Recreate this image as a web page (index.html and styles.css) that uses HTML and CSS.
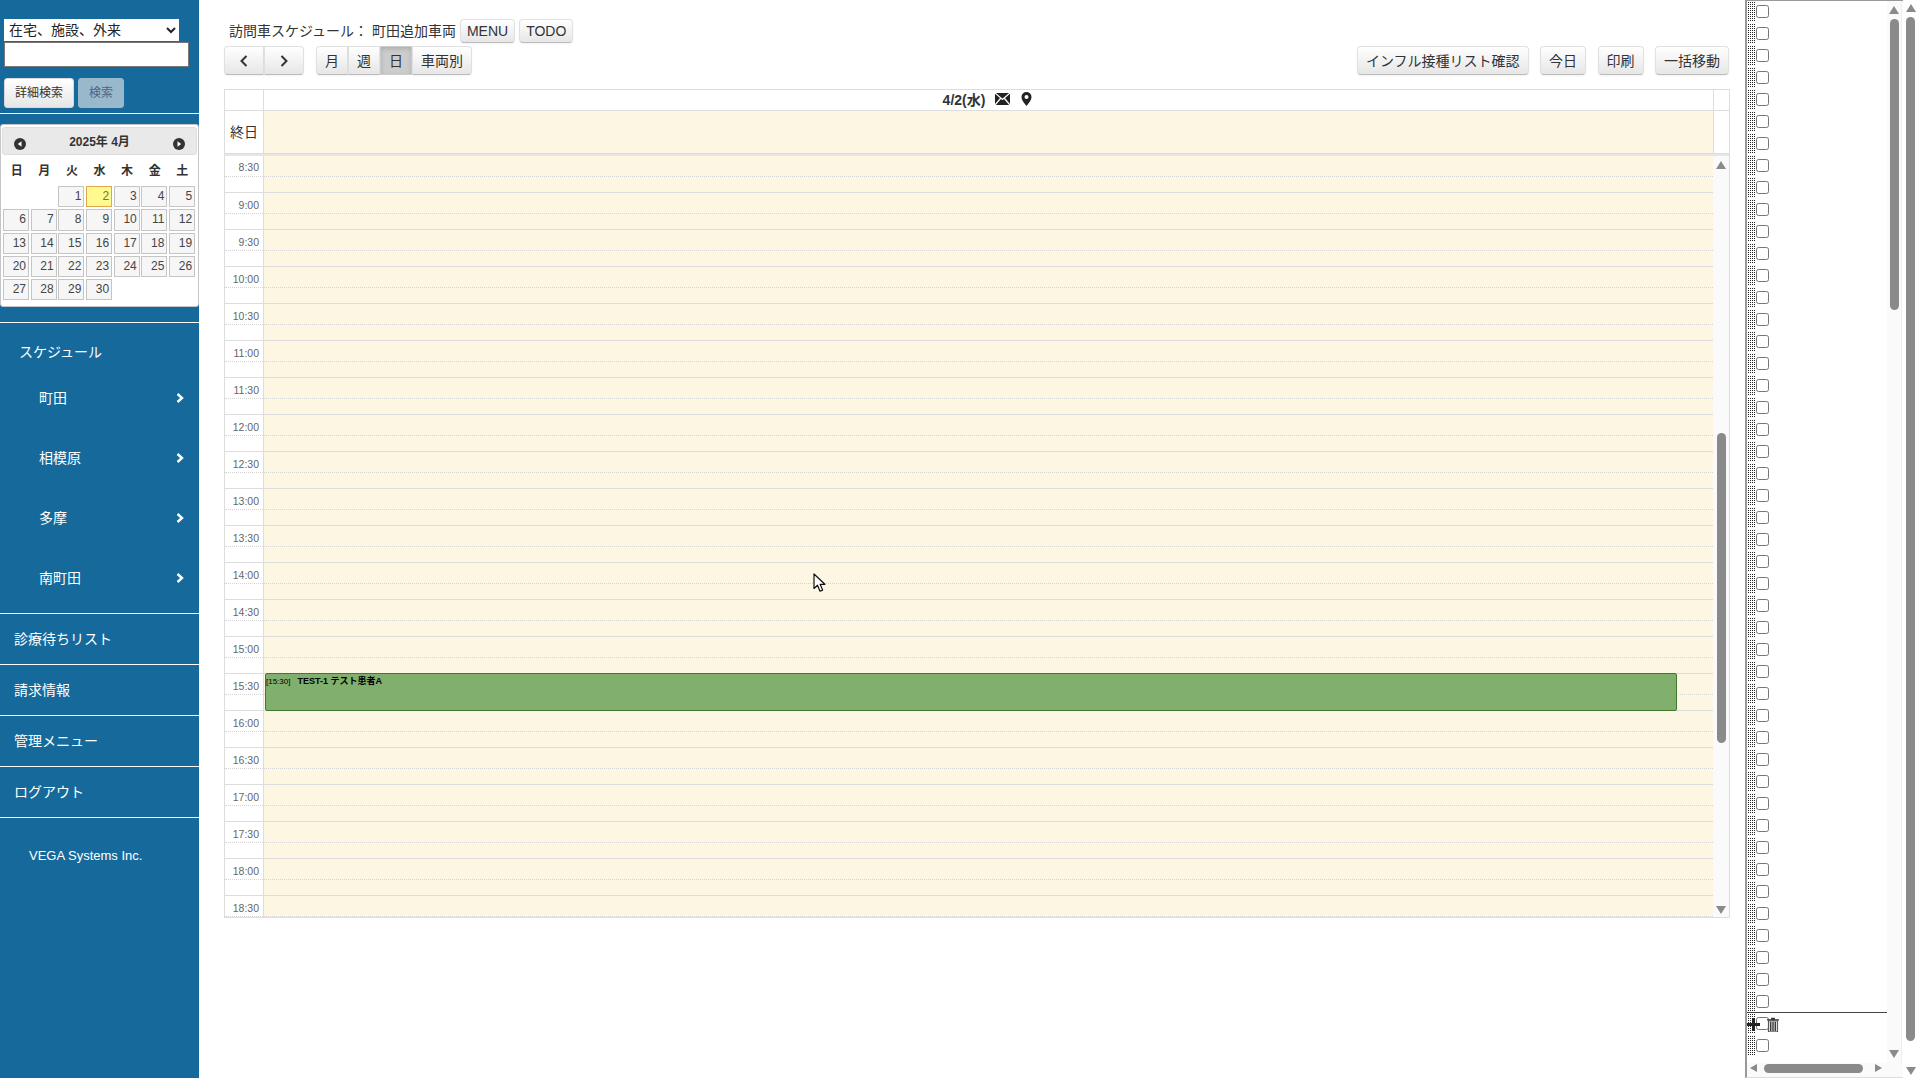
FILE: index.html
```html
<!DOCTYPE html>
<html lang="ja">
<head>
<meta charset="utf-8">
<title>訪問車スケジュール</title>
<link rel="stylesheet" href="styles.css">
</head>
<body>
<div class="app">
  <aside class="sidebar">
    <div class="search">
      <select class="search-select"><option>在宅、施設、外来</option></select>
      <input class="search-input" type="text">
      <div class="search-buttons">
        <button class="side-btn">詳細検索</button>
        <button class="side-btn disabled">検索</button>
      </div>
    </div>
    <div class="datepicker">
      <div class="dp-head">
        <svg class="dp-nav" viewBox="0 0 12 12"><circle cx="6" cy="6" r="6" fill="#333"/><path d="M7.5 3.2v5.6L3.8 6z" fill="#fff"/></svg>
        <span>2025年 4月</span>
        <svg class="dp-nav" viewBox="0 0 12 12"><circle cx="6" cy="6" r="6" fill="#333"/><path d="M4.5 3.2v5.6L8.2 6z" fill="#fff"/></svg>
      </div>
      <div class="dp-dow"><span>日</span><span>月</span><span>火</span><span>水</span><span>木</span><span>金</span><span>土</span></div>
      <div class="dp-grid">
        <span class="dp-empty"></span><span class="dp-empty"></span><span>1</span><span class="today">2</span><span>3</span><span>4</span><span>5</span>
        <span>6</span><span>7</span><span>8</span><span>9</span><span>10</span><span>11</span><span>12</span>
        <span>13</span><span>14</span><span>15</span><span>16</span><span>17</span><span>18</span><span>19</span>
        <span>20</span><span>21</span><span>22</span><span>23</span><span>24</span><span>25</span><span>26</span>
        <span>27</span><span>28</span><span>29</span><span>30</span>
      </div>
    </div>
    <nav class="menu">
      <div class="menu-group">
        <div class="menu-title">スケジュール</div>
        <div class="menu-sub">町田<svg class="chev" viewBox="0 0 8 10"><path d="M1.5 1 6 5 1.5 9" /></svg></div>
        <div class="menu-sub">相模原<svg class="chev" viewBox="0 0 8 10"><path d="M1.5 1 6 5 1.5 9" /></svg></div>
        <div class="menu-sub">多摩<svg class="chev" viewBox="0 0 8 10"><path d="M1.5 1 6 5 1.5 9" /></svg></div>
        <div class="menu-sub">南町田<svg class="chev" viewBox="0 0 8 10"><path d="M1.5 1 6 5 1.5 9" /></svg></div>
      </div>
      <div class="menu-item">診療待ちリスト</div>
      <div class="menu-item">請求情報</div>
      <div class="menu-item">管理メニュー</div>
      <div class="menu-item">ログアウト</div>
    </nav>
    <div class="vendor">VEGA Systems Inc.</div>
  </aside>

  <main class="main">
    <div class="title-row">
      <span class="page-title">訪問車スケジュール： 町田追加車両</span>
      <button class="btn">MENU</button>
      <button class="btn">TODO</button>
    </div>
    <div class="toolbar">
      <div class="toolbar-left">
        <div class="btn-group">
          <button class="btn arrow"><svg class="btn-chev" viewBox="0 0 8 12"><path d="M6.5 1 1.5 6l5 5"/></svg></button>
          <button class="btn arrow"><svg class="btn-chev" viewBox="0 0 8 12"><path d="M1.5 1l5 5-5 5"/></svg></button>
        </div>
        <div class="btn-group">
          <button class="btn">月</button>
          <button class="btn">週</button>
          <button class="btn active">日</button>
          <button class="btn">車両別</button>
        </div>
      </div>
      <div class="toolbar-right">
        <button class="btn">インフル接種リスト確認</button>
        <button class="btn">今日</button>
        <button class="btn">印刷</button>
        <button class="btn">一括移動</button>
      </div>
    </div>
    <section class="cal">
      <div class="cal-head">
        <div class="gutter"></div>
        <div class="cal-date">
          <span>4/2(水)</span>
          <svg class="mail" viewBox="0 0 15 12"><rect width="15" height="12" fill="#222"/><path d="M0 0l7.5 6.5L15 0M0 12l5.5-6.5M15 12 9.500 5.500" fill="none" stroke="#fff" stroke-width="1.300"/></svg>
          <svg class="pin" viewBox="0 0 11 14"><path d="M5.500 0a5 5 0 0 0-5 5c0 3.500 5 9 5 9s5-5.500 5-9a5 5 0 0 0-5-5z" fill="#222"/><circle cx="5.500" cy="5" r="2" fill="#fff"/></svg>
        </div>
        <div class="head-end"></div>
      </div>
      <div class="cal-allday">
        <div class="gutter allday-label">終日</div>
        <div class="allday-body"></div>
        <div class="head-end"></div>
      </div>
      <div class="cal-divider"></div>
      <div class="cal-body">
        <div class="slots">
          <div class="slot first"><div class="slot-time"><div class="minor label">8:30</div></div><div class="slot-main"><div class="minor"></div></div></div>
          <div class="slot"><div class="slot-time"><div class="minor label">9:00</div></div><div class="slot-main"><div class="minor"></div></div></div>
          <div class="slot"><div class="slot-time"><div class="minor label">9:30</div></div><div class="slot-main"><div class="minor"></div></div></div>
          <div class="slot"><div class="slot-time"><div class="minor label">10:00</div></div><div class="slot-main"><div class="minor"></div></div></div>
          <div class="slot"><div class="slot-time"><div class="minor label">10:30</div></div><div class="slot-main"><div class="minor"></div></div></div>
          <div class="slot"><div class="slot-time"><div class="minor label">11:00</div></div><div class="slot-main"><div class="minor"></div></div></div>
          <div class="slot"><div class="slot-time"><div class="minor label">11:30</div></div><div class="slot-main"><div class="minor"></div></div></div>
          <div class="slot"><div class="slot-time"><div class="minor label">12:00</div></div><div class="slot-main"><div class="minor"></div></div></div>
          <div class="slot"><div class="slot-time"><div class="minor label">12:30</div></div><div class="slot-main"><div class="minor"></div></div></div>
          <div class="slot"><div class="slot-time"><div class="minor label">13:00</div></div><div class="slot-main"><div class="minor"></div></div></div>
          <div class="slot"><div class="slot-time"><div class="minor label">13:30</div></div><div class="slot-main"><div class="minor"></div></div></div>
          <div class="slot"><div class="slot-time"><div class="minor label">14:00</div></div><div class="slot-main"><div class="minor"></div></div></div>
          <div class="slot"><div class="slot-time"><div class="minor label">14:30</div></div><div class="slot-main"><div class="minor"></div></div></div>
          <div class="slot"><div class="slot-time"><div class="minor label">15:00</div></div><div class="slot-main"><div class="minor"></div></div></div>
          <div class="slot"><div class="slot-time"><div class="minor label">15:30</div></div><div class="slot-main"><div class="minor"></div>
            <div class="event"><span class="event-time">[15:30]</span><b class="event-name">TEST-1 テスト患者A</b></div>
          </div></div>
          <div class="slot"><div class="slot-time"><div class="minor label">16:00</div></div><div class="slot-main"><div class="minor"></div></div></div>
          <div class="slot"><div class="slot-time"><div class="minor label">16:30</div></div><div class="slot-main"><div class="minor"></div></div></div>
          <div class="slot"><div class="slot-time"><div class="minor label">17:00</div></div><div class="slot-main"><div class="minor"></div></div></div>
          <div class="slot"><div class="slot-time"><div class="minor label">17:30</div></div><div class="slot-main"><div class="minor"></div></div></div>
          <div class="slot"><div class="slot-time"><div class="minor label">18:00</div></div><div class="slot-main"><div class="minor"></div></div></div>
          <div class="slot"><div class="slot-time"><div class="minor label">18:30</div></div><div class="slot-main"><div class="minor"></div></div></div>
        </div>
        <div class="grid-scroll">
          <i class="arr up"></i>
          <div class="thumb grid-thumb"></div>
          <i class="arr down grid-down"></i>
        </div>
      </div>
    </section>
    <svg class="cursor" viewBox="0 0 13 20"><path d="M1 1v14.500l3.500-3.300 2.500 6 2.600-1.100-2.500-5.800h4.800z" fill="#fff" stroke="#111" stroke-width="1.200" stroke-linejoin="round"/></svg>
  </main>

  <aside class="panel">
    <div class="panel-frame">
      <div class="panel-top">
        <div class="rows">
          <div class="row"><i class="handle"></i><input type="checkbox"></div>
          <div class="row"><i class="handle"></i><input type="checkbox"></div>
          <div class="row"><i class="handle"></i><input type="checkbox"></div>
          <div class="row"><i class="handle"></i><input type="checkbox"></div>
          <div class="row"><i class="handle"></i><input type="checkbox"></div>
          <div class="row"><i class="handle"></i><input type="checkbox"></div>
          <div class="row"><i class="handle"></i><input type="checkbox"></div>
          <div class="row"><i class="handle"></i><input type="checkbox"></div>
          <div class="row"><i class="handle"></i><input type="checkbox"></div>
          <div class="row"><i class="handle"></i><input type="checkbox"></div>
          <div class="row"><i class="handle"></i><input type="checkbox"></div>
          <div class="row"><i class="handle"></i><input type="checkbox"></div>
          <div class="row"><i class="handle"></i><input type="checkbox"></div>
          <div class="row"><i class="handle"></i><input type="checkbox"></div>
          <div class="row"><i class="handle"></i><input type="checkbox"></div>
          <div class="row"><i class="handle"></i><input type="checkbox"></div>
          <div class="row"><i class="handle"></i><input type="checkbox"></div>
          <div class="row"><i class="handle"></i><input type="checkbox"></div>
          <div class="row"><i class="handle"></i><input type="checkbox"></div>
          <div class="row"><i class="handle"></i><input type="checkbox"></div>
          <div class="row"><i class="handle"></i><input type="checkbox"></div>
          <div class="row"><i class="handle"></i><input type="checkbox"></div>
          <div class="row"><i class="handle"></i><input type="checkbox"></div>
          <div class="row"><i class="handle"></i><input type="checkbox"></div>
          <div class="row"><i class="handle"></i><input type="checkbox"></div>
          <div class="row"><i class="handle"></i><input type="checkbox"></div>
          <div class="row"><i class="handle"></i><input type="checkbox"></div>
          <div class="row"><i class="handle"></i><input type="checkbox"></div>
          <div class="row"><i class="handle"></i><input type="checkbox"></div>
          <div class="row"><i class="handle"></i><input type="checkbox"></div>
          <div class="row"><i class="handle"></i><input type="checkbox"></div>
          <div class="row"><i class="handle"></i><input type="checkbox"></div>
          <div class="row"><i class="handle"></i><input type="checkbox"></div>
          <div class="row"><i class="handle"></i><input type="checkbox"></div>
          <div class="row"><i class="handle"></i><input type="checkbox"></div>
          <div class="row"><i class="handle"></i><input type="checkbox"></div>
          <div class="row"><i class="handle"></i><input type="checkbox"></div>
          <div class="row"><i class="handle"></i><input type="checkbox"></div>
          <div class="row"><i class="handle"></i><input type="checkbox"></div>
          <div class="row"><i class="handle"></i><input type="checkbox"></div>
          <div class="row"><i class="handle"></i><input type="checkbox"></div>
          <div class="row"><i class="handle"></i><input type="checkbox"></div>
          <div class="row"><i class="handle"></i><input type="checkbox"></div>
          <div class="row"><i class="handle"></i><input type="checkbox"></div>
          <div class="row"><i class="handle"></i><input type="checkbox"></div>
          <div class="row sep"><i class="handle"></i><input type="checkbox"></div>
          <div class="row"><i class="handle"></i><input type="checkbox">
            <svg class="plus" viewBox="0 0 13 13"><path d="M5 0h3v5h5v3H8v5H5V8H0V5h5z" fill="#222"/></svg>
            <svg class="trash" viewBox="0 0 13 16"><path d="M4.500 1.500h4M0 3h13" stroke="#333" stroke-width="1.500" fill="none"/><rect x="1.500" y="4" width="10" height="12" fill="#ddd" stroke="#444"/><path d="M4 5v10M6.500 5v10M9 5v10" stroke="#333" stroke-width="1.400"/></svg>
          </div>
          <div class="row"><i class="handle"></i><input type="checkbox"></div>
        </div>
        <div class="panel-vscroll">
          <i class="arr up panel-up"></i>
          <div class="thumb panel-thumb"></div>
          <i class="arr down panel-down"></i>
        </div>
      </div>
      <div class="panel-hscroll">
        <i class="arr left"></i>
        <div class="hthumb"></div>
        <i class="arr right"></i>
      </div>
    </div>
    <div class="page-scroll">
      <i class="arr up page-up"></i>
      <div class="thumb page-thumb"></div>
      <i class="arr down page-down"></i>
    </div>
  </aside>
</div>
</body>
</html>
```

FILE: styles.css
```css
* { box-sizing: border-box; }
html, body { margin: 0; height: 100%; overflow: hidden; background: #fff; }
body {
  font-family: "Liberation Sans", "Noto Sans CJK JP", sans-serif;
  font-size: 14px;
  color: #333;
}
.app { display: flex; height: 1078px; width: 1918px; }

/* sidebar */
.sidebar { width: 199px; flex: none; background: #156a9b; color: #fff; display: flex; flex-direction: column; }
.search { padding: 19px 0 5px 4px; border-bottom: 1px solid #fff; height: 114px; }
.search-select {
  display: block; width: 175px; height: 22px; padding: 0 0 0 1px; border: 0; background: #fff; color: #222;
  font: 14px "Liberation Sans", "Noto Sans CJK JP", sans-serif; border-radius: 0;
}
.search-input { display: block; width: 185px; height: 25px; margin-top: 1px; border: 1px solid #777; background: #fff; }
.search-buttons { display: flex; gap: 4px; margin-top: 11px; }
.side-btn {
  height: 30px; padding: 0 10px; border: 1px solid #d9d9d9; border-radius: 3px;
  background: linear-gradient(#fff, #e6e6e6); color: #333;
  font: 12px/16px "Liberation Sans", "Noto Sans CJK JP", sans-serif;
}
.side-btn.disabled { background: #9ab8cb; border-color: #9ab8cb; color: #4c6484; padding: 0 10px; width: 46px; }

.datepicker { margin-top: 10px; width: 199px; height: 183px; background: #fff; border: 1px solid #c5c5c5; border-radius: 3px; padding: 2px 1px; color: #333; }
.dp-head { display: flex; align-items: center; justify-content: space-between; height: 28px; background: #e9e9e9; border: 1px solid #ddd; border-radius: 3px; padding: 0 11px; font-weight: 700; font-size: 12px; }
.dp-head span { color: #333; position: relative; top: -1px; }
.dp-nav { width: 12px; height: 12px; position: relative; top: 3px; }
.dp-dow { display: grid; grid-template-columns: repeat(7, 1fr); margin-top: 7px; padding: 0 1px; font-weight: 700; font-size: 12px; line-height: 18px; text-align: center; color: #333; }
.dp-grid { display: grid; grid-template-columns: repeat(7, 26px); column-gap: 1.700px; row-gap: 2px; grid-auto-rows: 21.300px; margin-top: 6px; padding-left: 1px; }
.dp-grid span { background: #f6f6f6; border: 1px solid #c5c5c5; font-size: 12px; line-height: 19px; text-align: right; padding-right: 2px; color: #454545; }
.dp-grid .dp-empty { background: none; border: 0; }
.dp-grid .today { background: #fffa90; border-color: #e2a64f; color: #777620; }

.menu { margin-top: 15px; border-top: 1px solid #fff; }
.menu-group { height: 291px; padding-top: 19px; border-bottom: 1px solid #fff; }
.menu-title { height: 26px; line-height: 20px; padding-left: 19px; }
.menu-sub { height: 60px; display: flex; align-items: center; justify-content: space-between; padding: 0 15px 0 39px; line-height: 20px; }
.chev { width: 8px; height: 10px; fill: none; stroke: #fff; stroke-width: 2.400; }
.menu-item { height: 51px; padding-left: 14px; line-height: 50px; border-bottom: 1px solid #fff; }
.vendor { margin-top: 30px; padding-left: 29px; font-size: 13px; line-height: 16px; }

/* main */
.main { flex: 1; min-width: 0; padding: 19px 15px 0 25px; position: relative; }
.title-row { display: flex; align-items: center; gap: 4px; height: 24px; padding-left: 5px; }
.page-title { line-height: 20px; white-space: pre; }
.btn {
  height: 24px; padding: 0 6px; border: 1px solid #e0e0e0; border-bottom-color: #bbb; border-radius: 4px;
  background: linear-gradient(#fff, #e6e6e6); color: #333;
  font: 14px/20px "Liberation Sans", "Noto Sans CJK JP", sans-serif;
  box-shadow: inset 0 1px 0 rgba(255,255,255,.2), 0 1px 2px rgba(0,0,0,.05);
}
.toolbar { display: flex; justify-content: space-between; margin-top: 3px; padding-right: 1px; }
.toolbar-left { display: flex; gap: 12px; }
.toolbar-right { display: flex; gap: 11.500px; }
.toolbar .btn { height: 29px; padding: 0 8px; }
.btn-group { display: flex; }
.btn-group .btn { border-radius: 0; }
.btn-group .btn:first-child { border-radius: 4px 0 0 4px; }
.btn-group .btn:last-child { border-radius: 0 4px 4px 0; }
.toolbar .btn.arrow { width: 40px; padding: 0; display: flex; align-items: center; justify-content: center; }
.btn-chev { width: 8px; height: 12px; fill: none; stroke: #333; stroke-width: 2; }
.toolbar .btn.active { background: #ccc; border-color: #ccc; box-shadow: inset 0 2px 4px rgba(0,0,0,.15); }

.cal { width: 1506px; height: 829px; margin-top: 14px; border: 1px solid #ddd; display: flex; flex-direction: column; }
.cal-head { display: flex; height: 21px; border-bottom: 1px solid #ddd; flex: none; }
.gutter { width: 39px; flex: none; border-right: 1px solid #ddd; }
.cal-date { flex: 1; border-right: 1px solid #ddd; display: flex; align-items: center; justify-content: center; gap: 10px; font-weight: 700; font-size: 14px; padding: 0 2px 2px 0; color: #333; }
.mail { width: 15px; height: 12px; }
.pin { width: 11px; height: 14px; margin-left: 1px; }
.head-end { width: 15px; flex: none; }
.cal-allday { display: flex; height: 42px; flex: none; }
.allday-label { text-align: center; line-height: 42px; color: #333; }
.allday-body { flex: 1; background: #fdf6e3; border-right: 1px solid #ddd; }
.cal-divider { height: 3px; flex: none; background: #e6e6e6; border-top: 1px solid #ddd; }
.cal-body { flex: 1; min-height: 0; display: flex; }
.slots { flex: 1; min-width: 0; overflow: hidden; }
.slot { display: flex; height: 37px; border-top: 1px solid #ddd; }
.slot.first { height: 36px; border-top: 0; }
.slot-time { width: 38px; flex: none; background: #fff; }
.slot-main { flex: 1; background: #fdf6e3; border-left: 1px solid #ddd; position: relative; }
.minor { height: 21px; border-bottom: 1px dotted #d4d4d4; }
.label { text-align: right; padding-right: 4px; font-size: 10.500px; line-height: 24px; color: #666; }
.slot.first .label { line-height: 22px; }
.event { position: absolute; left: 1px; right: 36px; top: -1px; height: 38px; background: #80af6e; border: 1px solid #3f7a2f; border-radius: 2px; color: #000; font-size: 8px; line-height: 14px; white-space: pre; }
.event-time { margin-right: 7px; }
.event-name { font-size: 9px; }

.grid-scroll { width: 16px; flex: none; background: #fafafa; display: flex; flex-direction: column; align-items: center; padding-top: 5px; }
.arr { display: block; width: 0; height: 0; flex: none; }
.arr.up { border: 5px solid transparent; border-top: 0; border-bottom: 8px solid #8a8a8a; }
.arr.down { border: 5px solid transparent; border-bottom: 0; border-top: 8px solid #8a8a8a; }
.arr.left { border: 4px solid transparent; border-left: 0; border-right: 7px solid #8a8a8a; }
.arr.right { border: 4px solid transparent; border-right: 0; border-left: 7px solid #8a8a8a; }
.thumb { width: 9px; background: #8a8a8a; border-radius: 5px; flex: none; }
.grid-thumb { height: 310px; margin-top: 264px; }
.grid-down { margin-top: 163px; }

.cursor { position: absolute; left: 614px; top: 573px; width: 13px; height: 20px; }

/* right panel */
.panel { width: 173px; flex: none; display: flex; }
.panel-frame { width: 158px; flex: none; border-left: 2px solid #999; border-top: 1px solid #999; border-bottom: 1px solid #ddd; display: flex; flex-direction: column; }
.panel-top { flex: 1; min-height: 0; display: flex; }
.rows { width: 140px; flex: none; overflow: hidden; margin-top: -1px; }
.row { height: 22px; display: flex; align-items: center; position: relative; }
.row.sep { box-shadow: 0 1px 0 #444; }
.handle { width: 8px; height: 19px; flex: none; background: repeating-conic-gradient(#222 0 25%, #fff 0 100%) 0 0 / 2px 2px; }
.row input { width: 13px; height: 13px; margin: 0 0 0 1px; flex: none; }
.plus { position: absolute; left: 0; top: 6px; width: 13px; height: 13px; }
.trash { position: absolute; left: 20px; top: 5px; width: 12px; height: 15px; }
.panel-vscroll { width: 15px; flex: none; background: #fafafa; border-right: 1px solid #eee; display: flex; flex-direction: column; align-items: center; padding-top: 5px; }
.panel-thumb { height: 291px; margin-top: 5px; }
.panel-down { margin-top: auto; margin-bottom: 5px; }
.panel-hscroll { height: 14px; flex: none; background: #fafafa; display: flex; align-items: center; padding: 0 0 4px 3px; }
.hthumb { width: 99px; height: 9px; background: #8a8a8a; border-radius: 5px; margin: 0 12px 0 7px; }
.page-scroll { width: 15px; flex: none; display: flex; flex-direction: column; align-items: center; background: #fff; padding-top: 4px; }
.page-thumb { height: 1024px; margin-top: 5px; }
.page-down { margin-top: 26px; }
```
